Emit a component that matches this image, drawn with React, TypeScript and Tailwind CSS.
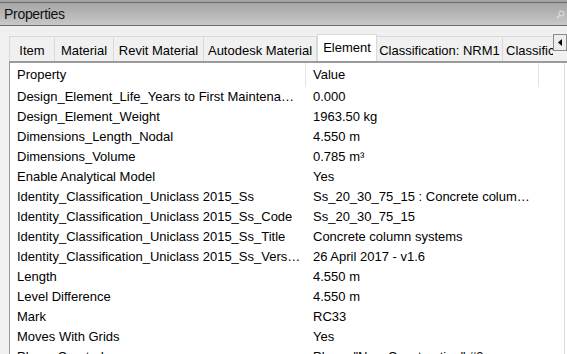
const tabs = [
  { label: 'Item', w: 'w-[46px]' },
  { label: 'Material', w: 'w-[59px]' },
  { label: 'Revit Material', w: 'w-[90px]' },
  { label: 'Autodesk Material', w: 'w-[113px]' },
  { label: 'Element', w: 'w-[60px]', active: true },
  { label: 'Classification: NRM1', w: 'w-[126px]' },
  { label: 'Classification: Uniclass', w: 'w-[140px]' },
];

const rows: [string, string][] = [
  ['Design_Element_Life_Years to First Maintenance', '0.000'],
  ['Design_Element_Weight', '1963.50 kg'],
  ['Dimensions_Length_Nodal', '4.550 m'],
  ['Dimensions_Volume', '0.785 m³'],
  ['Enable Analytical Model', 'Yes'],
  ['Identity_Classification_Uniclass 2015_Ss', 'Ss_20_30_75_15 : Concrete column systems'],
  ['Identity_Classification_Uniclass 2015_Ss_Code', 'Ss_20_30_75_15'],
  ['Identity_Classification_Uniclass 2015_Ss_Title', 'Concrete column systems'],
  ['Identity_Classification_Uniclass 2015_Ss_Version', '26 April 2017 - v1.6'],
  ['Length', '4.550 m'],
  ['Level Difference', '4.550 m'],
  ['Mark', 'RC33'],
  ['Moves With Grids', 'Yes'],
  ['Phase Created', 'Phase "New Construction" #3'],
];

export default function App() {
  return (
    <div className="h-[354px] w-[567px] overflow-hidden bg-[#f0f0f0] font-['Liberation_Sans',Arial,sans-serif] text-black">
      {/* title bar */}
      <div className="h-[2px] bg-[#a3a3a3]" />
      <div className="relative flex h-[24px] items-center border-y border-[#6c6c6c] bg-gradient-to-b from-[#a5a5a5] to-[#c8c8c8] pl-[4px]">
        <span className="text-[14px] tracking-[-0.3px] text-[#111]">Properties</span>
        <svg className="absolute right-[2px] top-[7px]" width="9" height="9" viewBox="0 0 9 9">
          <circle cx="5.5" cy="3.5" r="2.5" fill="none" stroke="#e2e2e2" strokeWidth="1" />
          <path d="M3.5 5.5 L1 8" stroke="#e2e2e2" strokeWidth="1.2" />
        </svg>
      </div>

      {/* tabs */}
      <div className="mt-[8px] flex h-[27px] items-end pl-[9px]">
        <div className="flex h-[27px] w-[544px] items-end overflow-hidden">
          {tabs.map((t) =>
            t.active ? (
              <div
                key={t.label}
                className={`${t.w} flex h-[27px] shrink-0 justify-center border-x border-t border-[#d9d9d9] bg-white pt-[3px] text-[13px]`}
              >
                {t.label}
              </div>
            ) : (
              <div
                key={t.label}
                className={`${t.w} flex h-[25px] shrink-0 justify-center border-t border-r border-[#d9d9d9] bg-[#f0f0f0] pt-[4px] text-[13px] first:border-l`}
              >
                <span className="whitespace-nowrap">{t.label}</span>
              </div>
            ),
          )}
        </div>
        <div className="mb-[6px] flex h-[17px] w-[14px] shrink-0 items-center justify-center self-start border border-[#8a8a8a] bg-[#ececec]">
          <svg width="5" height="7" viewBox="0 0 5 7">
            <path d="M4 0 L0 3.5 L4 7 Z" fill="#000" />
          </svg>
        </div>
      </div>

      {/* list panel */}
      <div className="ml-[9px] h-[300px] border-t-2 border-l border-[#9a9a9a] bg-white pr-[2px]">
        <div className="h-full border-r border-[#dcdcdc] text-[13px]">
          <div className="flex h-[24px] items-center">
            <div className="flex h-full w-[296px] items-center border-r border-[#e5e5e5] pl-[7px]">Property</div>
            <div className="flex h-full w-[233px] items-center border-r border-[#e5e5e5] pl-[7px]">Value</div>
          </div>
          {rows.map(([name, value]) => (
            <div key={name} className="flex h-[20px] items-center">
              <div className="w-[296px] truncate pl-[7px] pr-[5px]">{name}</div>
              <div className="w-[233px] truncate pl-[7px] pr-[4px]">{value}</div>
            </div>
          ))}
        </div>
      </div>
    </div>
  );
}
